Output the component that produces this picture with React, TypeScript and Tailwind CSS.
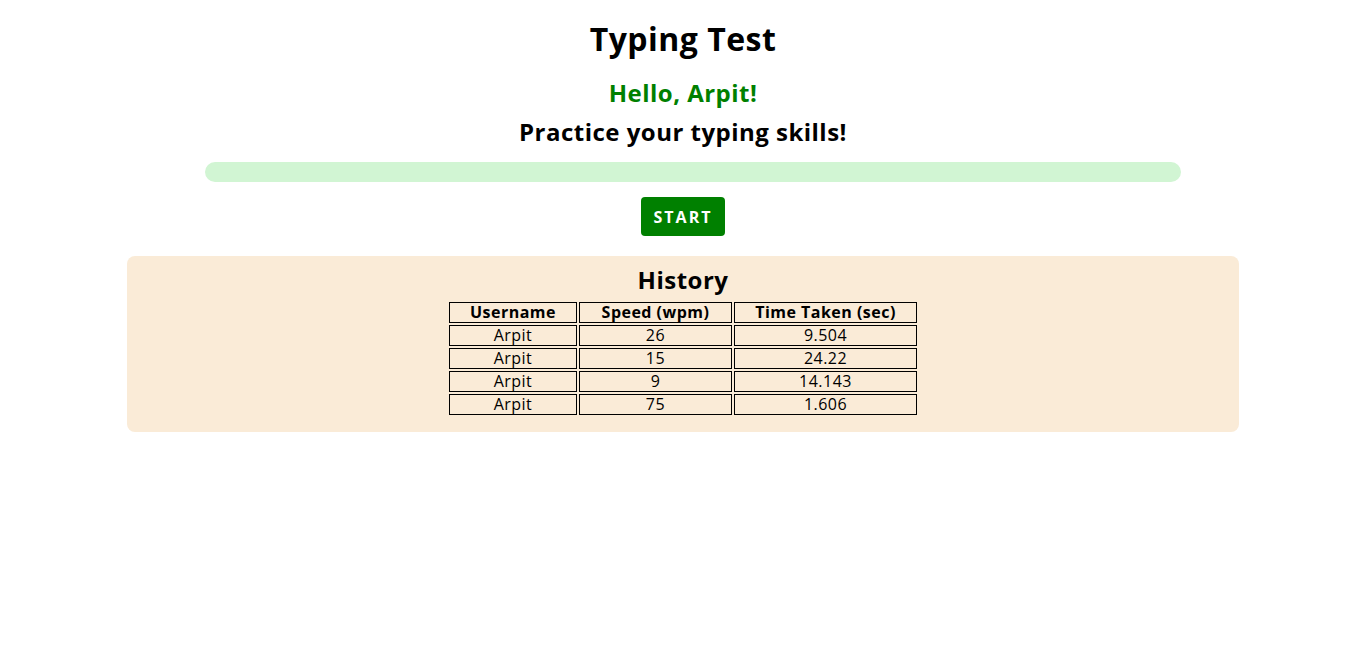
import React from "react";

const rows = [
  { user: "Arpit", speed: 26, time: "9.504" },
  { user: "Arpit", speed: 15, time: "24.22" },
  { user: "Arpit", speed: 9, time: "14.143" },
  { user: "Arpit", speed: 75, time: "1.606" },
];

export default function App() {
  return (
    <div className="min-h-screen bg-white text-black font-['Open_Sans',sans-serif] tracking-[0.03em] flex flex-col items-center pt-[19px]">
      <h1 className="text-[32px] font-bold leading-[39px]">Typing Test</h1>
      <h2 className="mt-[20px] text-[24px] font-bold leading-[29px] text-[#008000]">Hello, Arpit!</h2>
      <h2 className="mt-[10px] text-[24px] font-bold leading-[29px]">Practice your typing skills!</h2>
      {/* progress bar */}
      <div className="mt-[16px] self-start ml-[205px] h-[20px] w-[976px] rounded-full bg-[#d1f5d3]" />
      <button className="mt-[15px] h-[39px] w-[84px] rounded-[4px] bg-[#008000] text-[16px] font-bold tracking-[2px] text-white">
        START
      </button>
      {/* history */}
      <div className="mt-[20px] w-[1112px] rounded-[8px] bg-[#faebd7] pt-[9px] pb-[15px] flex flex-col items-center">
        <h2 className="text-[24px] font-bold leading-[30px]">History</h2>
        <table className="mt-[5px] border-separate border-spacing-[2px] text-[16px] leading-[19px]">
          <thead>
            <tr>
              <th className="w-[128px] border border-black font-bold">Username</th>
              <th className="w-[153px] border border-black font-bold">Speed (wpm)</th>
              <th className="w-[183px] border border-black font-bold">Time Taken (sec)</th>
            </tr>
          </thead>
          <tbody>
            {rows.map((r, i) => (
              <tr key={i}>
                <td className="border border-black text-center">{r.user}</td>
                <td className="border border-black text-center">{r.speed}</td>
                <td className="border border-black text-center">{r.time}</td>
              </tr>
            ))}
          </tbody>
        </table>
      </div>
    </div>
  );
}
